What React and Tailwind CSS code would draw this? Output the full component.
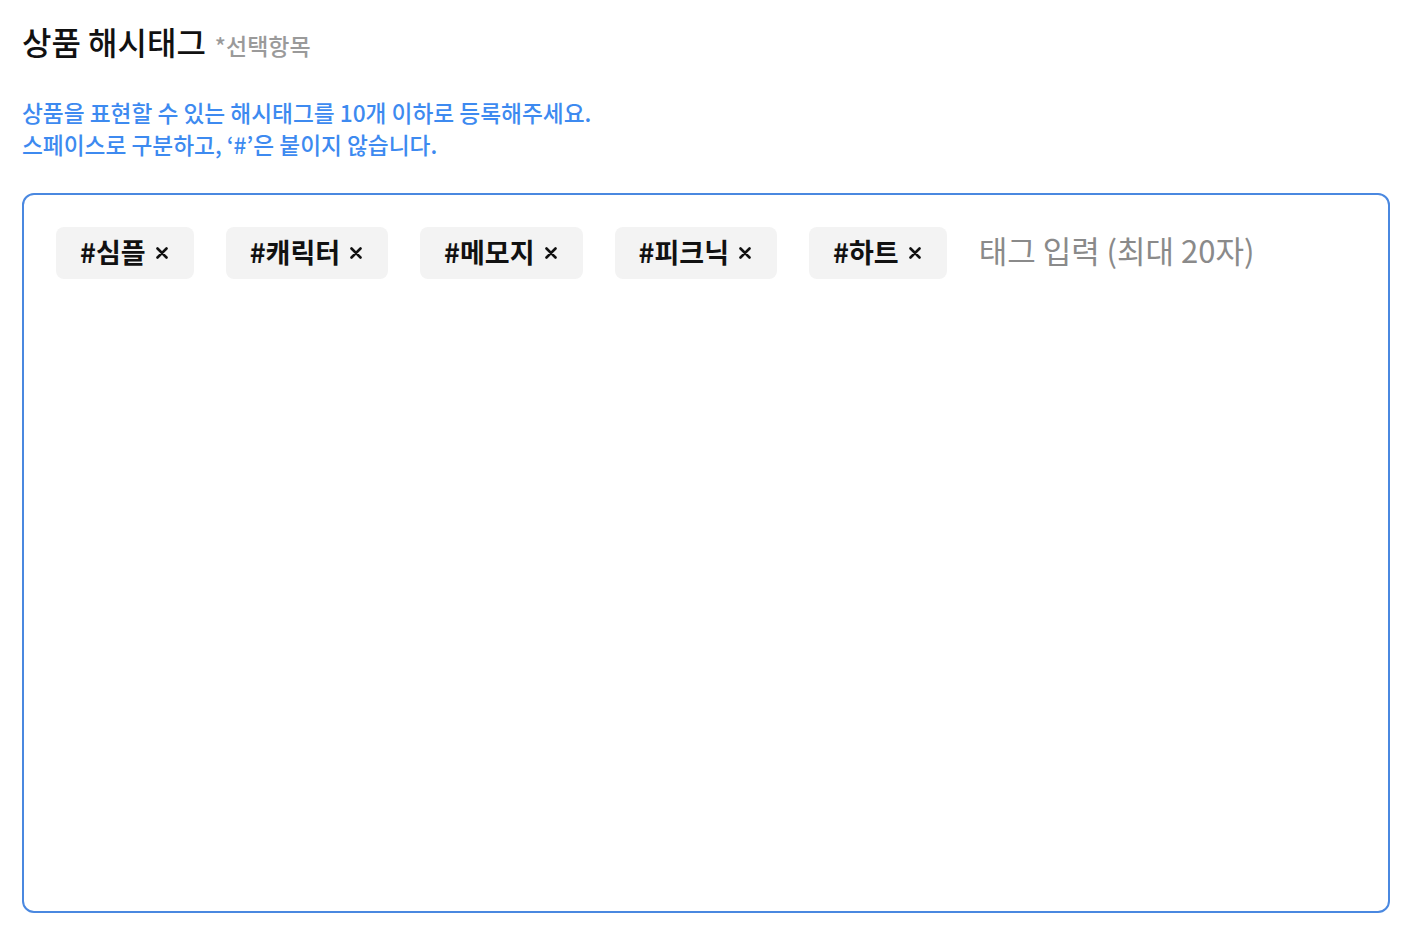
import React from 'react';

const tags = ['심플', '캐릭터', '메모지', '피크닉', '하트'];

const Tag = ({ label }) => (
    <span className="flex items-center gap-[10px] h-[52px] pl-[24px] pr-[26px] pb-[4px] rounded-[8px] bg-[#f3f3f3] text-[27px] font-bold text-[#111] leading-none">
        <span>#{label}</span>
        <svg width="12" height="12" viewBox="0 0 12 12" className="mt-[4px]">
            <path d="M1.5 1.5 L10.5 10.5 M10.5 1.5 L1.5 10.5" stroke="#111" strokeWidth="2.6" strokeLinecap="round" />
        </svg>
    </span>
);

const App = () => {
    return (
        <div className="min-h-screen bg-white px-[22px] pt-[19px] font-['Noto_Sans_CJK_KR','Noto_Sans',sans-serif]">
            {/* heading */}
            <div className="flex items-baseline gap-[9px]">
                <h2 className="text-[32px] font-medium text-[#111] leading-[44px]">상품 해시태그</h2>
                <span className="text-[23px] font-medium text-[#9a9a9a]">*선택항목</span>
            </div>

            <p className="mt-[34px] text-[22.7px] font-medium leading-[32px] text-[#3d8af0]">
                상품을 표현할 수 있는 해시태그를 10개 이하로 등록해주세요.
                <br />
                스페이스로 구분하고, ‘#’은 붙이지 않습니다.
            </p>

            {/* tag input box */}
            <div className="mt-[32px] h-[720px] w-[1368px] rounded-[12px] border-2 border-[#4a88e0] px-[32px] pt-[32px]">
                <div className="flex flex-wrap items-center gap-[32px]">
                    {tags.map((t) => (
                        <Tag key={t} label={t} />
                    ))}
                    <input
                        className="flex-1 min-w-[300px] mb-[5px] text-[31px] text-[#222] placeholder:text-[#8a8a8a] outline-none bg-transparent"
                        placeholder="태그 입력 (최대 20자)"
                    />
                </div>
            </div>
        </div>
    );
};

export default App;
